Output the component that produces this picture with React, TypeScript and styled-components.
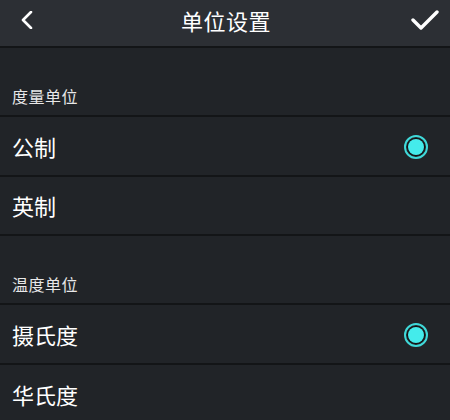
import styled, { createGlobalStyle } from "styled-components"

const GlobalStyle = createGlobalStyle`
	html, body {
		margin: 0;
		padding: 0;
		background-color: #212428;
	}
	body {
		font-family: "Noto Sans CJK SC", "Noto Sans", sans-serif;
		color: #f2f2f2;
	}
`

const Page = styled.div`
	width: 450px;
	height: 420px;
	overflow: hidden;
	background-color: #212428;
`

const Header = styled.div`
	height: 46px;
	background-color: #2c2f34;
	border-bottom: 2px solid #131517;
	display: flex;
	align-items: center;
	justify-content: space-between;
	padding: 0 10px 6px 12px;
	box-sizing: content-box;
	height: 40px;
`

const Title = styled.div`
	font-size: 22px;
	color: #ffffff;
	letter-spacing: 0.5px;
`

const IconButton = styled.div`
	width: 30px;
	height: 30px;
	display: flex;
	align-items: center;
	justify-content: center;
`

const SectionTitle = styled.div`
	height: 69px;
	display: flex;
	align-items: flex-end;
	padding: 0 12px 7px;
	box-sizing: border-box;
	font-size: 16px;
	letter-spacing: 0.5px;
	color: #e8e8e8;
	border-bottom: 2px solid #131517;
`

const Row = styled.div<{ $last?: boolean }>`
	height: 59.5px;
	box-sizing: border-box;
	display: flex;
	align-items: center;
	justify-content: space-between;
	padding: 0 22px 0 12px;
	font-size: 22px;
	color: #ffffff;
	border-bottom: ${(p) => (p.$last ? "none" : "2px solid #131517")};
`

const Radio = styled.div`
	width: 24px;
	height: 24px;
	box-sizing: border-box;
	border-radius: 50%;
	border: 2px solid #3fd9d9;
	display: flex;
	align-items: center;
	justify-content: center;
	margin-top: 2px;

	&::after {
		content: "";
		width: 16px;
		height: 16px;
		border-radius: 50%;
		background-color: #44ebeb;
		box-shadow: 0 0 0 1px #111;
	}
`

const sections = [
	{ title: "度量单位", options: ["公制", "英制"], selected: 0 },
	{ title: "温度单位", options: ["摄氏度", "华氏度"], selected: 0 },
]

export default function App() {
	return (
		<Page>
			<GlobalStyle />
			<Header>
				<IconButton>
					<svg width="14" height="18" viewBox="0 0 14 18">
						<path d="M11 1 L3 9 L11 17" fill="none" stroke="#fff" strokeWidth="2.6" strokeLinecap="round" strokeLinejoin="round" />
					</svg>
				</IconButton>
				<Title>单位设置</Title>
				<IconButton>
					<svg width="28" height="22" viewBox="0 0 28 22">
						<path d="M2 11 L10 19 L26 3" fill="none" stroke="#fff" strokeWidth="3.4" strokeLinecap="round" strokeLinejoin="round" />
					</svg>
				</IconButton>
			</Header>
			{sections.map((s, si) => (
				<div key={s.title}>
					<SectionTitle>{s.title}</SectionTitle>
					{s.options.map((o, i) => (
						<Row key={o} $last={si === sections.length - 1 && i === s.options.length - 1}>
							{o}
							{i === s.selected && <Radio />}
						</Row>
					))}
				</div>
			))}
		</Page>
	)
}
